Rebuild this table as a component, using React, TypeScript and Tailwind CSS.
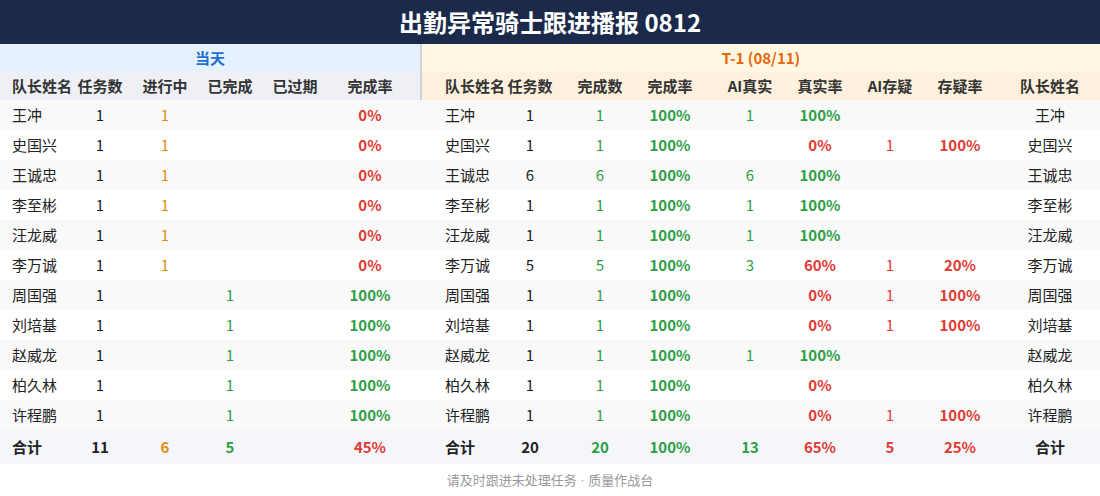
import React from "react";

type Cell = { v: string; c?: string; b?: boolean };

const GRID =
  "grid grid-cols-[70px_60px_70px_60px_70px_80px_12px_73px_70px_70px_70px_10px_70px_70px_70px_70px_5px_100px]";

const K = "text-[#222]";
const O = "text-[#dd8e12]";
const G = "text-[#2e9e46]";
const R = "text-[#e03a33]";

interface Row {
  name: string;
  today: [number, number | null, number | null, string];
  prev: [number, number, string, number | null, string | null, number | null, string | null];
}

const rows: Row[] = [
  { name: "王冲", today: [1, 1, null, "0%"], prev: [1, 1, "100%", 1, "100%", null, null] },
  { name: "史国兴", today: [1, 1, null, "0%"], prev: [1, 1, "100%", null, "0%", 1, "100%"] },
  { name: "王诚忠", today: [1, 1, null, "0%"], prev: [6, 6, "100%", 6, "100%", null, null] },
  { name: "李至彬", today: [1, 1, null, "0%"], prev: [1, 1, "100%", 1, "100%", null, null] },
  { name: "汪龙威", today: [1, 1, null, "0%"], prev: [1, 1, "100%", 1, "100%", null, null] },
  { name: "李万诚", today: [1, 1, null, "0%"], prev: [5, 5, "100%", 3, "60%", 1, "20%"] },
  { name: "周国强", today: [1, null, 1, "100%"], prev: [1, 1, "100%", null, "0%", 1, "100%"] },
  { name: "刘培基", today: [1, null, 1, "100%"], prev: [1, 1, "100%", null, "0%", 1, "100%"] },
  { name: "赵威龙", today: [1, null, 1, "100%"], prev: [1, 1, "100%", 1, "100%", null, null] },
  { name: "柏久林", today: [1, null, 1, "100%"], prev: [1, 1, "100%", null, "0%", null, null] },
  { name: "许程鹏", today: [1, null, 1, "100%"], prev: [1, 1, "100%", null, "0%", 1, "100%"] },
];

const rateColor = (r: string) => (r === "100%" ? G : R);

const Num = ({ cell }: { cell: Cell }) => (
  <div className={`text-center ${cell.c ?? K} ${cell.b ? "font-bold" : ""}`}>{cell.v}</div>
);

const DataRow = ({ row, i }: { row: Row; i: number }) => {
  const [t1, t2, t3, t4] = row.today;
  const [p1, p2, p3, p4, p5, p6, p7] = row.prev;
  return (
    <div className={`${GRID} h-[30px] items-center ${i % 2 === 0 ? "bg-[#f9f9fa]" : "bg-white"}`}>
      <div className="pl-3 text-[#222] whitespace-nowrap">{row.name}</div>
      <Num cell={{ v: String(t1) }} />
      <Num cell={{ v: t2 ? String(t2) : "", c: O }} />
      <Num cell={{ v: t3 ? String(t3) : "", c: G }} />
      <div />
      <Num cell={{ v: t4, c: rateColor(t4), b: true }} />
      <div />
      <div className="pl-[23px] text-[#222] whitespace-nowrap">{row.name}</div>
      <Num cell={{ v: String(p1) }} />
      <Num cell={{ v: String(p2), c: G }} />
      <Num cell={{ v: p3, c: G, b: true }} />
      <div />
      <Num cell={{ v: p4 ? String(p4) : "", c: G }} />
      <Num cell={{ v: p5 ?? "", c: p5 ? rateColor(p5) : K, b: true }} />
      <Num cell={{ v: p6 ? String(p6) : "", c: R }} />
      <Num cell={{ v: p7 ?? "", c: R, b: true }} />
      <div />
      <div className="text-center text-[#222]">{row.name}</div>
    </div>
  );
};

export default function App() {
  return (
    <div
      className="w-[1100px] h-[496px] bg-white text-[15px] overflow-hidden"
      style={{ fontFamily: '"Noto Sans CJK SC", "Noto Sans", sans-serif' }}
    >
      <div className="h-[44px] bg-[#1b2a4b] flex items-center justify-center text-white text-[24px] font-bold">
        出勤异常骑士跟进播报 0812
      </div>

      <div className="flex h-[28px] font-bold">
        <div className="w-[422px] bg-[#e5f1fc] border-r-2 border-[#cfd3d8] flex items-center justify-center text-[#1d6fd1]">
          当天
        </div>
        <div className="flex-1 bg-[#fff7e2] flex items-center justify-center text-[#e8660c]">
          T-1 (08/11)
        </div>
      </div>

      <div
        className={`${GRID} h-[28px] items-center font-bold text-[#333] bg-[linear-gradient(to_right,#eef0f5_420px,#cfd3d8_420px,#cfd3d8_422px,#fdf1de_422px)]`}
      >
        <div className="pl-3 whitespace-nowrap">队长姓名</div>
        {["任务数", "进行中", "已完成", "已过期", "完成率"].map((h) => (
          <div key={h} className="text-center whitespace-nowrap">
            {h}
          </div>
        ))}
        <div />
        <div className="pl-[23px] whitespace-nowrap">队长姓名</div>
        {["任务数", "完成数", "完成率"].map((h) => (
          <div key={h} className="text-center whitespace-nowrap">
            {h}
          </div>
        ))}
        <div />
        {["AI真实", "真实率", "AI存疑", "存疑率"].map((h) => (
          <div key={h} className="text-center whitespace-nowrap">
            {h}
          </div>
        ))}
        <div />
        <div className="text-center whitespace-nowrap">队长姓名</div>
      </div>

      {rows.map((r, i) => (
        <DataRow key={r.name} row={r} i={i} />
      ))}

      <div className={`${GRID} h-[34px] items-center font-bold bg-[#f4f6fa]`}>
        <div className="pl-3 text-[#222]">合计</div>
        <Num cell={{ v: "11" }} />
        <Num cell={{ v: "6", c: O }} />
        <Num cell={{ v: "5", c: G }} />
        <div />
        <Num cell={{ v: "45%", c: R }} />
        <div />
        <div className="pl-[23px] text-[#222]">合计</div>
        <Num cell={{ v: "20" }} />
        <Num cell={{ v: "20", c: G }} />
        <Num cell={{ v: "100%", c: G }} />
        <div />
        <Num cell={{ v: "13", c: G }} />
        <Num cell={{ v: "65%", c: R }} />
        <Num cell={{ v: "5", c: R }} />
        <Num cell={{ v: "25%", c: R }} />
        <div />
        <div className="text-center text-[#222]">合计</div>
      </div>

      <div className="h-[32px] flex items-center justify-center text-[13px] text-[#999]">
        请及时跟进未处理任务
        <span className="font-['Liberation_Sans'] whitespace-pre"> · </span>
        质量作战台
      </div>
    </div>
  );
}
